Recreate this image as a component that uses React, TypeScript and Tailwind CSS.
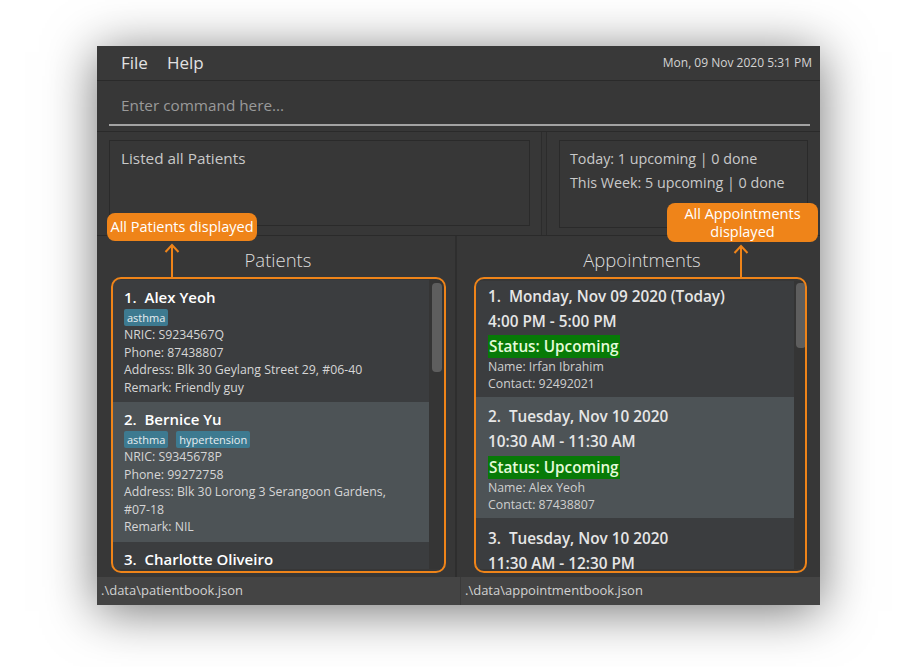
import React from 'react';

interface Patient {
  name: string;
  tags: string[];
  nric: string;
  phone: string;
  address: string[];
  remark: string;
}

interface Appointment {
  date: string;
  time: string;
  status: string;
  name: string;
  contact: string;
}

const patients: Patient[] = [
  {
    name: 'Alex Yeoh',
    tags: ['asthma'],
    nric: 'S9234567Q',
    phone: '87438807',
    address: ['Blk 30 Geylang Street 29, #06-40'],
    remark: 'Friendly guy',
  },
  {
    name: 'Bernice Yu',
    tags: ['asthma', 'hypertension'],
    nric: 'S9345678P',
    phone: '99272758',
    address: ['Blk 30 Lorong 3 Serangoon Gardens,', '#07-18'],
    remark: 'NIL',
  },
];

const appointments: Appointment[] = [
  {
    date: 'Monday, Nov 09 2020 (Today)',
    time: '4:00 PM - 5:00 PM',
    status: 'Upcoming',
    name: 'Irfan Ibrahim',
    contact: '92492021',
  },
  {
    date: 'Tuesday, Nov 10 2020',
    time: '10:30 AM - 11:30 AM',
    status: 'Upcoming',
    name: 'Alex Yeoh',
    contact: '87438807',
  },
];

function Arrow() {
  return (
    <svg width="16" height="34" viewBox="0 0 16 34" fill="none">
      <path d="M8 2 V34" stroke="#ef8419" strokeWidth="2" />
      <path d="M1.5 9 L8 2 L14.5 9" stroke="#ef8419" strokeWidth="2" strokeLinejoin="miter" />
    </svg>
  );
}

function PatientCard({ patient, index }: { patient: Patient; index: number }) {
  const even = index % 2 === 1;
  return (
    <div className={`pl-[12px] pr-2 pt-[7px] pb-[6px] ${even ? 'bg-[#4d5356]' : 'bg-[#3b3d3f]'}`}>
      <div className="text-[15px] leading-[20px] font-semibold text-white">
        {index + 1}.&nbsp;&nbsp;{patient.name}
      </div>
      <div className="flex gap-[8px] mt-[2px]">
        {patient.tags.map((tag) => (
          <span
            key={tag}
            className="bg-[#3d7a90] text-[#e8eef0] text-[11px] leading-[17px] px-[3px] rounded-[2px]"
          >
            {tag}
          </span>
        ))}
      </div>
      <div className="text-[12.3px] leading-[17.5px] text-[#d6d6d6]">
        <div>NRIC: {patient.nric}</div>
        <div>Phone: {patient.phone}</div>
        <div>Address: {patient.address[0]}</div>
        {patient.address.slice(1).map((line) => (
          <div key={line}>{line}</div>
        ))}
        <div>Remark: {patient.remark}</div>
      </div>
    </div>
  );
}

function AppointmentCard({ appt, index }: { appt: Appointment; index: number }) {
  const even = index % 2 === 1;
  return (
    <div
      className={`pl-[12px] pr-2 pb-[5px] ${index === 0 ? 'pt-[5px]' : 'pt-[9px]'} ${
        even ? 'bg-[#4d5356]' : 'bg-[#3b3d3f]'
      }`}
    >
      <div className="text-[15.3px] leading-[20px] font-semibold text-[#e6e6e6]">
        {index + 1}.&nbsp;&nbsp;{appt.date}
      </div>
      <div className="mt-[5px] text-[15.3px] leading-[20px] font-semibold text-[#e6e6e6]">{appt.time}</div>
      <div className={`flex ${index === 0 ? 'mt-[4px]' : 'mt-[5px]'}`}>
        <span className="bg-[#077a07] text-[#e4fbd8] text-[15.3px] leading-[23px] font-semibold px-[1px]">
          Status: {appt.status}
        </span>
      </div>
      <div className="text-[12.3px] leading-[17px] text-[#cfcfcf]">
        <div>Name: {appt.name}</div>
        <div>Contact: {appt.contact}</div>
      </div>
    </div>
  );
}

export default function App() {
  return (
    <div className="min-h-screen bg-white pt-[46px] pl-[97px] font-['Open_Sans','Noto_Sans',sans-serif]">
      <div className="relative w-[723px] h-[559px] bg-[#373737] flex flex-col shadow-[0_6px_48px_rgba(0,0,0,0.55)]">
        {/* Menu bar */}
        <div className="h-[35px] shrink-0 bg-[#393939] border-b border-[#2a2a2a] flex items-center justify-between pl-[24px] pr-[8px]">
          <div className="flex gap-[19px] text-[17px] text-[#e2e2e2]">
            <span>File</span>
            <span>Help</span>
          </div>
          <span className="text-[12px] text-[#d4d4d4]">Mon, 09 Nov 2020 5:31 PM</span>
        </div>

        {/* Command box */}
        <div className="h-[51px] shrink-0 pl-[12px] pr-[10px] border-b border-[#2a2a2a]">
          <div className="h-[45px] border-b-2 border-[#a3a3a3] flex items-center pl-[12px] pt-[6px]">
            <span className="text-[15.3px] text-[#9a9a9a]">Enter command here...</span>
          </div>
        </div>

        {/* Result + stats */}
        <div className="h-[104px] shrink-0 flex border-b border-[#2a2a2a]">
          <div className="w-[444px] pl-[12px] pr-[11px] pt-[8px]">
            <div className="h-[86px] border border-[#2a2a2a] pl-[11px] pt-[5px]">
              <span className="text-[15.3px] leading-[24px] text-[#c9c9c9]">Listed all Patients</span>
            </div>
          </div>
          <div className="w-[6px] border-x border-[#2c2c2c] bg-[#363636]" />
          <div className="flex-1 pl-[12px] pr-[12px] pt-[8px]">
            <div className="h-[88px] border border-[#2a2a2a] pl-[10px] pt-[6px] text-[14.3px] leading-[24px] text-[#c9c9c9]">
              <div>Today: 1 upcoming | 0 done</div>
              <div>This Week: 5 upcoming | 0 done</div>
            </div>
          </div>
        </div>

        {/* Lists */}
        <div className="flex-1 flex min-h-0">
          <div className="w-[358px] flex flex-col pl-[15px] pr-[11px] pb-[8px]">
            <div className="h-[44px] shrink-0 pt-[11px] text-center text-[18.5px] leading-[26px] font-light text-[#dedede]">
              Patients
            </div>
            <div className="flex-1 min-h-0 flex bg-[#353535] overflow-hidden">
              <div className="flex-1">
                {patients.map((p, i) => (
                  <PatientCard key={p.name} patient={p} index={i} />
                ))}
                <div className="pl-[12px] pt-[7px] bg-[#3b3d3f] h-[40px] text-[15px] leading-[20px] font-semibold text-white">
                  3.&nbsp;&nbsp;Charlotte Oliveiro
                </div>
              </div>
              <div className="w-[15px] shrink-0 pt-[3px] pl-[3px] pr-[2px]">
                <div className="h-[89px] rounded-[4px] bg-[#5e5e5e]" />
              </div>
            </div>
          </div>
          <div className="w-[2px] bg-[#2e2e2e]" />
          <div className="flex-1 flex flex-col pl-[19px] pr-[12px] pb-[8px]">
            <div className="h-[45px] shrink-0 pt-[11px] text-center text-[18.5px] leading-[26px] font-light text-[#dedede]">
              Appointments
            </div>
            <div className="flex-1 min-h-0 flex bg-[#353535] overflow-hidden">
              <div className="flex-1">
                {appointments.map((a, i) => (
                  <AppointmentCard key={a.time} appt={a} index={i} />
                ))}
                <div className="pl-[12px] pt-[10px] bg-[#3b3d3f] h-[60px]">
                  <div className="text-[15.3px] leading-[20px] font-semibold text-[#e6e6e6]">
                    3.&nbsp;&nbsp;Tuesday, Nov 10 2020
                  </div>
                  <div className="mt-[5px] text-[15.3px] leading-[20px] font-semibold text-[#e6e6e6]">
                    11:30 AM - 12:30 PM
                  </div>
                </div>
              </div>
              <div className="w-[14px] shrink-0 pt-[2px] pl-[2px] pr-[2px]">
                <div className="h-[65px] rounded-[4px] bg-[#5e5e5e]" />
              </div>
            </div>
          </div>
        </div>

        {/* Status bar */}
        <div className="h-[28px] shrink-0 flex bg-[#444444] text-[13px] text-[#d2d2d2]">
          <div className="w-[364px] pl-[4px] flex items-center border-r border-[#3a3a3a]">.\data\patientbook.json</div>
          <div className="flex-1 pl-[4px] flex items-center">.\data\appointmentbook.json</div>
        </div>

        {/* Annotations */}
        <div className="absolute left-[14px] top-[231px] w-[335px] h-[296px] border-[2.5px] border-[#ef8419] rounded-[10px] pointer-events-none" />
        <div className="absolute left-[377px] top-[231px] w-[333px] h-[296px] border-[2.5px] border-[#ef8419] rounded-[10px] pointer-events-none" />

        <div className="absolute left-[10px] top-[167px] w-[150px] h-[28px] rounded-[8px] bg-[#ef8419] flex items-center justify-center text-[14.5px] text-white">
          All Patients displayed
        </div>
        <div className="absolute left-[570px] top-[157px] w-[151px] h-[39px] rounded-[8px] bg-[#ef8419] flex flex-col items-center justify-center text-center text-[14.5px] leading-[17.5px] text-white">
          <span>All Appointments</span>
          <span>displayed</span>
        </div>

        <div className="absolute left-[67px] top-[197px]">
          <Arrow />
        </div>
        <div className="absolute left-[636px] top-[198px]">
          <Arrow />
        </div>
      </div>
    </div>
  );
}
